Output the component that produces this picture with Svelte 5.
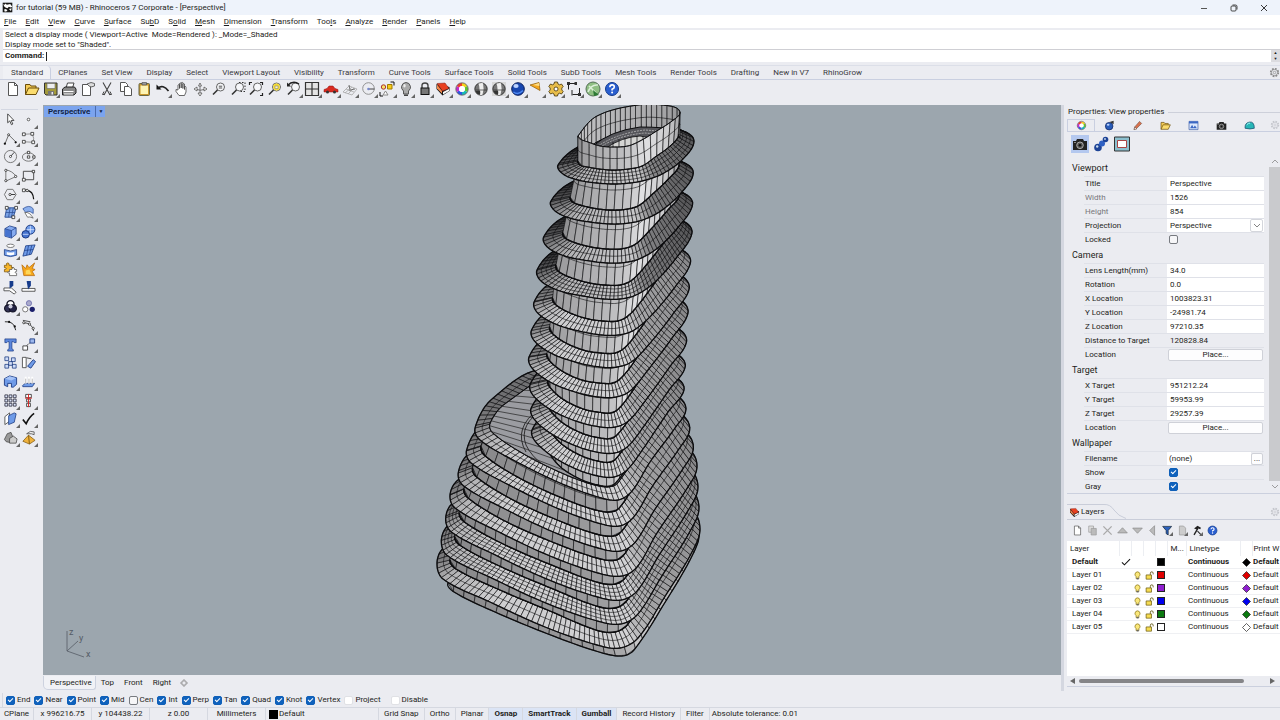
<script lang="ts">
  type Pt = [number, number];
  type Face = { points: string; fill: string };
  type Band = { faces: Face[]; rows: string; rim: string; rimWidth: number };
  type Key = { y: number; outer: Pt[]; inner: Pt[] };
  type Row = { label: string; kind: string; value?: string; dim?: boolean; checked?: boolean };

  const menus = [
    ['', 'F', 'ile'], ['', 'E', 'dit'], ['', 'V', 'iew'], ['', 'C', 'urve'], ['', 'S', 'urface'],
    ['Su', 'b', 'D'], ['S', 'o', 'lid'], ['', 'M', 'esh'], ['', 'D', 'imension'], ['', 'T', 'ransform'],
    ['Too', 'l', 's'], ['', 'A', 'nalyze'], ['', 'R', 'ender'], ['', 'P', 'anels'], ['', 'H', 'elp']
  ];

  const toolTabs = [
    'Standard', 'CPlanes', 'Set View', 'Display', 'Select', 'Viewport Layout', 'Visibility', 'Transform',
    'Curve Tools', 'Surface Tools', 'Solid Tools', 'SubD Tools', 'Mesh Tools', 'Render Tools', 'Drafting',
    'New in V7', 'RhinoGrow'
  ];

  const gear = '<path d="M6.500 1h3l.5 2 1.500.8L13.500 3l1.700 2.500L13.800 7v2l1.400 1.500L13.500 13l-2-.8-1.500.8-.5 2h-3L6 13l-1.500-.8-2 .8-1.700-2.500L2.200 9V7L.8 5.500 2.500 3l2 .8L6 3z" fill="#e8bd4a" stroke="#443208" stroke-width=".8"/><circle cx="8" cy="8" r="2" fill="#fff" stroke="#443208" stroke-width=".8"/>';
  const lens = '<circle cx="9.5" cy="6" r="4" fill="#f6f7fa" stroke="#555" stroke-width=".9"/><path d="M6.5 9L2 13.5" stroke="#333" stroke-width="1.6"/>';
  const sphere = '<circle cx="8" cy="8" r="6.2" fill="#777" stroke="#222" stroke-width=".8"/><path d="M5.500 2.500Q8.500 1.500 10 2.200Q11.500 8 9.500 13.800Q7 14.500 5.500 13.500Q7.500 8 5.500 2.500z" fill="#eee"/><path d="M2.500 9H13.500" stroke="#333" stroke-width=".7"/><path d="M2.500 10Q4 13.500 7 14Q7.500 11 7 9.500z" fill="#333"/>';
  const wheel = '<g fill="none" stroke-width="3"><path d="M8 3.5A4.5 4.5 0 0 1 11.9 5.75" stroke="#f6d21c"/><path d="M11.9 5.75A4.5 4.5 0 0 1 11.9 10.25" stroke="#5fc52e"/><path d="M11.9 10.25A4.5 4.5 0 0 1 8 12.5" stroke="#17b9b6"/><path d="M8 12.5A4.5 4.5 0 0 1 4.1 10.25" stroke="#2b55e8"/><path d="M4.1 10.25A4.5 4.5 0 0 1 4.1 5.75" stroke="#c42bd0"/><path d="M4.1 5.75A4.5 4.5 0 0 1 8 3.5" stroke="#ef3b2c"/></g><circle cx="8" cy="8" r="6.2" fill="none" stroke="#444" stroke-width=".7"/><circle cx="8" cy="8" r="3" fill="#fff"/>';
  const help = '<circle cx="8" cy="8" r="6.5" fill="#2a5fd0" stroke="#123a8c"/><path d="M5.8 6.2Q6 3.9 8.100 3.9T10.300 6Q10.300 7.3 8.100 8.2V9.6" fill="none" stroke="#fff" stroke-width="1.6"/><circle cx="8.1" cy="11.6" r="1" fill="#fff"/>';
  const layersIcon = '<path d="M1.500 3v5l6 6.500 7-4.500V6z" fill="#111"/><path d="M2 2.500L10 2l4 5.500L7.500 10z" fill="#e8401f" stroke="#722" stroke-width=".5"/><path d="M2 3.500v4l5 5V10z" fill="#f58a4c"/><path d="M8 11l6-3v2l-6 3.500z" fill="#f8f8f8"/>';
  const page = '<path d="M3.5 1.5h6l3 3v10h-9z" fill="#fff" stroke="#555"/><path d="M9.5 1.5v3h3" fill="none" stroke="#555"/>';
  const camera = '<path d="M1 5h3l1-2h6l1 2h3v9H1z" fill="#222"/><circle cx="8" cy="9.3" r="3.3" fill="#555" stroke="#aaa"/><circle cx="8" cy="9.3" r="1.3" fill="#111"/><path d="M2 6.500h2" stroke="#888"/>';
  const folder = '<path d="M1.5 13.5V3.5H6l1 1.500h5v2" fill="#f5cc57" stroke="#6b4d0a"/><path d="M1.5 13.5L4.500 7h10.500l-3 6.500z" fill="#fbdc6e" stroke="#6b4d0a"/>';
  const copy = '<path d="M2.5 1.5h5l2 2v7h-7z" fill="#fff" stroke="#555"/><path d="M6.5 5.5h4.500l2.500 2.500v6.500h-7z" fill="#fff" stroke="#555"/>';

  const icons: Record<string, string> = {
    new: page,
    open: folder,
    save: '<path d="M1.5 2h12.5v12H3l-1.500-1.500z" fill="#a39a3c" stroke="#333"/><path d="M4 2.5h8v5H4z" fill="#eee" stroke="#666" stroke-width=".6"/><path d="M5 10h6v4H5z" fill="#777"/><path d="M8.5 11h1.500v2.500H8.500z" fill="#eee"/>',
    print: '<path d="M5 7L6.5 2H13l-1.500 5" fill="#fff" stroke="#444"/><path d="M1.5 8L4 6h9.500L15 8v4l-2 2H1.500z" fill="#888" stroke="#222"/><path d="M2.5 10.5h10M3 13h9" stroke="#fff"/>',
    sheet: '<path d="M2.5 3.5h6l2 2v9h-8z" fill="#fff" stroke="#555"/><path d="M7 3l4-1.500 3.500 1v2.500L11 6 9 5z" fill="#ddd" stroke="#444" stroke-width=".8"/>',
    cut: '<path d="M4 1.500L11 14M12 1.500L5 14" stroke="#444" stroke-width="1.1"/><path d="M5 10.500L3.500 13.500H5.500M11 10.500l1.500 3h-2" fill="none" stroke="#444"/>',
    copy,
    paste: '<rect x="3" y="2.5" width="10.5" height="12" rx="1" fill="#c9972b" stroke="#664"/><path d="M4.5 4.5h7.500v8.500H4.500z" fill="#fdf4b4"/><path d="M6 1.5h4.500v2.500H6z" fill="#999" stroke="#444" stroke-width=".6"/>',
    undo: '<path d="M1.500 3.500v5h5z" fill="#111"/><path d="M3 7Q8 3 13.500 10" fill="none" stroke="#222" stroke-width="1.7"/>',
    pan: '<path d="M5 14.5L2 10.5V8.500l2 .5V4q1-1 1.500 0V7.500 2.500q1-1 1.700 0V7 1.800q1-1 1.700 0V7.500 3q1-1 1.600 0V8.500 5.500q1.500-.5 1.500 1V11l-1.500 3.500z" fill="#fff" stroke="#444" stroke-width=".8"/>',
    rotate: '<path d="M8 2l1.500 3h-3zM8 15l2-3H6zM2 8l3-2v4zM15 8l-3-2v4z" fill="#fff" stroke="#555" stroke-width=".8"/><path d="M8 5v7M5 8.500Q8 10 12 8.500" fill="none" stroke="#555" stroke-width=".8"/>',
    zoom: lens + '<path d="M7.8 5.200h3.400M7.800 7h3.400" stroke="#555"/>',
    zoomWindow: lens + '<path d="M9 1.500h6v9H9" fill="none" stroke="#333" stroke-dasharray="1.5 1.5"/>',
    zoomExtents: lens + '<path d="M1.5 4V1.500H4M12 1.500h2.500V4M14.500 12v2.500H12" fill="none" stroke="#222" stroke-width="1.2"/>',
    zoomSelected: lens + '<circle cx="9.5" cy="6" r="3.4" fill="#f5dc31"/><path d="M8 5h3v2.500H8z" fill="#fbf6c2" stroke="#888" stroke-width=".6"/>',
    undoView: lens + '<path d="M1.5 4.500Q7-1 13 3" fill="none" stroke="#222" stroke-width="1.5"/><path d="M1 1.500v4h4z" fill="#222"/>',
    viewports: '<path d="M1.500 1.500h13v13h-13z" fill="#e4e4e4" stroke="#333" stroke-width="1.2"/><path d="M8 1.500v13M1.500 8h13" stroke="#333" stroke-width="1.2"/>',
    car: '<path d="M1 8.500l3-1 2-2.500h4l2 2.500 3 1v2.500H1z" fill="#d92b20" stroke="#811" stroke-width=".5"/><circle cx="4.5" cy="11" r="1.5" fill="#333"/><circle cx="11.5" cy="11" r="1.5" fill="#333"/>',
    cplane: '<path d="M1 11l6-6 8 3-5 6zM4 8l8 3M3 12l7-6M6 13l6-6" fill="none" stroke="#aaa" stroke-width=".8"/><path d="M8 9l5-1M8 9L7 4" stroke="#555" stroke-width=".8"/><circle cx="8" cy="9" r="1.3" fill="#999"/>',
    circleSnap: '<circle cx="7.5" cy="7.5" r="5.8" fill="none" stroke="#888" stroke-width=".9"/><path d="M7.500 8h6" stroke="#333" stroke-width=".9"/><circle cx="7.5" cy="8" r="1.3" fill="#7788cc"/>',
    shapes: '<circle cx="4.5" cy="6" r="2.200" fill="#f9e063" stroke="#a33"/><path d="M8.500 3.500h4.500v4.500H8.500z" fill="#f7cd16" stroke="#a37a00"/><path d="M6.500 10l2.500 4H4z" fill="#fff" stroke="#888"/><path d="M11.500 1h3.500v3.500M1 11v4h3" fill="none" stroke="#111"/>',
    bulb: '<path d="M5.500 10Q3 7.500 3.500 5.500 4.500 1.500 8 1.500T12.500 5.500Q13 7.500 10.500 10v3h-5z" fill="#aaa" stroke="#555"/><path d="M6 13.500h4v1.500H6z" fill="#444"/><ellipse cx="6.5" cy="4.8" rx="1.2" ry="1.8" fill="#eee"/>',
    lock: '<path d="M5 7V4.500Q5 2 8 2t3 2.500V7" fill="none" stroke="#444" stroke-width="1.4"/><rect x="4" y="7" width="8" height="6.5" fill="#777" stroke="#111"/>',
    layers: layersIcon,
    wheel,
    shaded: sphere,
    ghosted: '<path d="M1 1h14v14H1z" fill="#d7d7d7"/>' + sphere,
    blueBall: '<circle cx="8" cy="8" r="6.300" fill="#1746b0" stroke="#0a1f5c"/><ellipse cx="6" cy="5" rx="2.600" ry="2" fill="#bcd3ff"/><path d="M3.500 11Q8 14.500 13 9.500" fill="none" stroke="#4e88f2" stroke-width="1.5"/>',
    cone: '<path d="M1 4l9-2.500 1 8z" fill="#f3a61e" stroke="#8a5a08" stroke-width=".7"/><path d="M4 4l6-2 .3 3z" fill="#fde08a"/>',
    gear,
    dims: '<path d="M2.500 2.500v6M2.500 2.500h7M6 9v5.500M6.500 13.500h7M13.500 7v6" fill="none" stroke="#222"/><path d="M1 1h3v3H1zM8.500 1h2.500v3H8.500zM12 12h3v3h-3z" fill="#333"/>',
    globe: '<circle cx="8" cy="8" r="7" fill="#8fbf83" stroke="#567058"/><path d="M3 11Q6 3 13 4M4 5l7 7" fill="none" stroke="#dcefd8" stroke-width="1.5"/><path d="M8 9l6 5-5 1z" fill="#2d7a35"/>',
    help,
    arrow: '<path d="M5 2v9.500l2.200-2 1.800 4 1.500-.7-1.800-3.800h3z" fill="#fff" stroke="#333" stroke-width=".9"/>',
    point: '<circle cx="8" cy="8" r="1.4" fill="#fff" stroke="#333" stroke-width=".8"/>',
    polyline: '<path d="M2 14L6 4l8 8" fill="none" stroke="#555" stroke-width=".9"/><circle cx="2" cy="13.5" r="1.2" fill="#111"/><circle cx="6" cy="4" r="1.1" fill="#fff" stroke="#222" stroke-width=".8"/><circle cx="13.5" cy="12" r="1.2" fill="#111"/>',
    curve: '<path d="M3 3.500L12 3Q14.500 8 13 12L3 11.500" fill="none" stroke="#777" stroke-width=".8"/><path d="M1.500 2h3v3h-3zM10.500 1.500h3v3h-3zM1.500 10h3v3h-3zM11.500 10.500h3v3h-3z" fill="#fff" stroke="#222" stroke-width=".8"/>',
    circle: '<circle cx="8" cy="8" r="6.5" fill="none" stroke="#666" stroke-width=".9"/><path d="M8 8l4-4.500" stroke="#222" stroke-width=".9"/><circle cx="8" cy="8" r="1.1" fill="#fff" stroke="#222" stroke-width=".8"/>',
    ellipse: '<ellipse cx="8" cy="8.5" rx="6.5" ry="4.5" fill="none" stroke="#666" stroke-width=".9"/><path d="M6.800 2.500h2.500V5H6.800zM6.800 7.300h2.500v2.500H6.800zM12.500 7.300H15v2.500h-2.500z" fill="#fff" stroke="#222" stroke-width=".8"/>',
    arc: '<path d="M3 14V2Q10 3 14 9z" fill="none" stroke="#666" stroke-width=".9"/><circle cx="3" cy="2.5" r="1.2" fill="#fff" stroke="#222" stroke-width=".8"/><circle cx="3" cy="13.5" r="1.2" fill="#fff" stroke="#222" stroke-width=".8"/><circle cx="13.5" cy="9" r="1.2" fill="#fff" stroke="#222" stroke-width=".8"/>',
    rect: '<path d="M2.500 3.500h11v9h-11z" fill="none" stroke="#444"/><path d="M1.500 11h3v3h-3zM12 2.500h2.500V5H12z" fill="#fff" stroke="#222" stroke-width=".8"/>',
    polygon: '<path d="M4.500 2.500h6L14 8l-3.500 5.500h-6L1.500 8z" fill="none" stroke="#666" stroke-width=".9"/><path d="M7 8h6" stroke="#333"/><circle cx="7.5" cy="8" r="1.2" fill="#fff" stroke="#222" stroke-width=".8"/>',
    fillet: '<path d="M2 3.500h4Q13 4 13.500 13" fill="none" stroke="#111" stroke-width="1.3"/><path d="M1.500 2h3v3h-3z" fill="#fff" stroke="#222" stroke-width=".8"/><circle cx="6.5" cy="3.7" r="1.3" fill="#fff" stroke="#222" stroke-width=".8"/>',
    surface: '<path d="M4 3h10l-3 10H2z" fill="#7aa2e6" stroke="#2d4f96"/><path d="M7.500 3L6 13M11 3L9 13M3 8h10" stroke="#2d4f96" stroke-width=".8"/><path d="M2.500 1.500h3v3h-3zM12.500 1.500h3v3h-3zM9.500 11.500h3v3h-3z" fill="#fff" stroke="#222" stroke-width=".8"/>',
    sweep: '<path d="M2 4Q9-1 13 4v5Q8 5 5 8z" fill="#8cb0ee" stroke="#2d4f96" stroke-width=".8"/><path d="M4 8q5-1 9 6-4-2-6-1z" fill="#fff" stroke="#555" stroke-width=".8"/>',
    box: '<path d="M2 5l5-3 7 2v7l-5 4-7-2z" fill="#86abf0" stroke="#16357e" stroke-width=".8"/><path d="M2.300 5.300L8.800 7.200V14.500L2.300 12.700z" fill="#4673cf"/><path d="M2 5l7 2 5-3M9 7v8" fill="none" stroke="#16357e" stroke-width=".7"/>',
    spheres: '<circle cx="10" cy="6" r="4.8" fill="#6f9be8" stroke="#16357e"/><circle cx="5" cy="11" r="4" fill="#4673cf" stroke="#16357e"/><path d="M6 6h8M10 2v8M2 11h6" stroke="#dde8ff" stroke-width=".8"/>',
    pipe: '<ellipse cx="8" cy="3" rx="4" ry="1.8" fill="#fff" stroke="#555" stroke-width=".8"/><path d="M1.500 7Q8 10 14.500 7v6Q8 16 1.500 13z" fill="#6f9be8" stroke="#16357e" stroke-width=".8"/><path d="M4 9.500Q8 11 12 9.500v3Q8 13.500 4 12.500z" fill="#fff"/>',
    mesh: '<path d="M5 3l10-1-4 10-9 2z" fill="#6f9be8" stroke="#16357e" stroke-width=".8"/><path d="M3.500 8L13 7M8 3l-2 10M11.500 2.500L9 12.500" stroke="#16357e" stroke-width=".7"/>',
    puzzle: '<path d="M1.500 3.500h2.500q-1-2.500 1-2.500T6.500 3.500H9V6q2.500-1 2.500 1T9 8v2.500H1.500V8q2 0 2-1t-2-1z" fill="#f6b62b" stroke="#7a520a" stroke-width=".8"/><path d="M7 8h2.500q0-2 1.500-2t1 2h2.500v2q-1.500 0-1.500 1t1.500 1v2.500H7V12Q5 12 5 11t2-.5z" fill="#fff" stroke="#555" stroke-width=".8"/>',
    explode: '<path d="M1 3l4 4 1.500-4L8.500 6 14.500 1 12 7l3 1-3 2 2.500 4.500H3z" fill="#f6a71c" stroke="#b8690a" stroke-width=".8"/><path d="M5 9l4-1 2 5H5z" fill="#fdd75b"/>',
    trim: '<path d="M1 8.500h8l5 4.500-2 2-5-3.500H1z" fill="#fff" stroke="#444" stroke-width=".9"/><path d="M7 1h4v5L7 9z" fill="#173c8c"/>',
    split: '<path d="M1 9h14v3H1z" fill="#fff" stroke="#444" stroke-width=".9"/><path d="M6 1h4.500v5L7.500 10z" fill="#173c8c"/>',
    union: '<circle cx="8" cy="5.5" r="3.8" fill="#fff" stroke="#112" stroke-width="1.4"/><circle cx="5.5" cy="10" r="3.8" fill="#335" stroke="#112" stroke-width="1.2"/><circle cx="10.5" cy="10" r="3.8" fill="#224" stroke="#112" stroke-width="1.2"/><circle cx="8" cy="8" r="2.2" fill="#ccd"/>',
    group: '<circle cx="8.5" cy="4.5" r="2.8" fill="#aac" stroke="#66a" stroke-width=".8"/><circle cx="4.5" cy="11" r="2.8" fill="#fff" stroke="#555" stroke-width=".8"/><circle cx="12" cy="11" r="2.8" fill="#1b1f6b"/>',
    blend: '<path d="M2 4Q12 3 13.500 13" fill="none" stroke="#222"/><circle cx="6.5" cy="4.2" r="1.2" fill="#111"/><circle cx="12.5" cy="9" r="1.2" fill="#111"/>',
    adjust: '<path d="M2 5Q12 5 13.500 14M2 2.500l8 1.500" fill="none" stroke="#333" stroke-width=".9"/><circle cx="3" cy="5" r="1.2" fill="#fff" stroke="#222" stroke-width=".8"/><circle cx="9" cy="6.5" r="1.2" fill="#fff" stroke="#222" stroke-width=".8"/><circle cx="13" cy="11" r="1.2" fill="#fff" stroke="#222" stroke-width=".8"/>',
    text: '<path d="M2 2h12v4h-2L11 5H9.500v7.500l1.500 1V15H5v-1.500l1.500-1V5H5L4 6H2z" fill="#5c87dc" stroke="#16357e" stroke-width=".7"/>',
    move: '<path d="M2 9.500h5V14H2z" fill="#fff" stroke="#333" stroke-width=".9"/><path d="M9.500 2h5v4.500h-5z" fill="#9db8ee" stroke="#16357e" stroke-width=".9"/><path d="M6 9l4-3" stroke="#333" stroke-dasharray="1.5 1"/>',
    block: '<path d="M2 2h4v4H2zM9 3h4v4H9zM6 7h4v4H6zM2 10h4v4H2zM10 10h4v4h-4z" fill="#cfdcf8" stroke="#16357e" stroke-width=".8"/>',
    orient: '<path d="M1.500 2.500h4v11h-4z" fill="#fff" stroke="#444" stroke-width=".9"/><path d="M7 12l6-7 2.500 2-5 7z" fill="#6f9be8" stroke="#16357e" stroke-width=".9"/><path d="M6 3l5 1" stroke="#444"/>',
    solid: '<path d="M1.500 5L7 2l7.500 2v7L11 14H9v-4H5v3.500L1.500 12z" fill="#6f9be8" stroke="#16357e" stroke-width=".9"/><path d="M2 5L7 2.500l7 1.800L9 7z" fill="#a6c3f7"/>',
    extrude: '<path d="M1.500 12.500l3-2.500h10l-2.500 3.500H2z" fill="#6f9be8" stroke="#16357e" stroke-width=".8"/><path d="M5 10V3M8.500 10V3M12 10V3" stroke="#fff" stroke-width="2"/><path d="M5 5v5M8.500 5v5M12 5v5" stroke="#999" stroke-width=".7"/>',
    array: '<path d="M2 2h3v3H2zM6.500 2h3v3h-3zM11 2h3v3h-3zM2 6.500h3v3H2zM6.500 6.500h3v3h-3zM11 6.500h3v3h-3zM2 11h3v3H2zM6.500 11h3v3h-3zM11 11h3v3h-3z" fill="#dbe4f8" stroke="#223" stroke-width=".8"/>',
    align: '<path d="M5 1.500h6v3.500H5zM6 6.500h4v3H6zM6 11h4v3.500H6z" fill="#fff" stroke="#333" stroke-width=".9"/><path d="M8 1v14M4.500 5.500h7" stroke="#d22"/>',
    cage: '<path d="M2 6l5-4v9l-5 3.500z" fill="#fff" stroke="#333" stroke-width=".8"/><path d="M6 5l6-3 2 1-2 9-6 2.500z" fill="#6f9be8" stroke="#16357e" stroke-width=".8"/>',
    check: '<path d="M2 9l3.500 4.500Q9 6 14 2.500" fill="none" stroke="#111" stroke-width="1.8"/>',
    shapesGray: '<path d="M1.500 10l3-6 4-1.500 2 5-2 6-5-1z" fill="#999" stroke="#444" stroke-width=".8"/><path d="M7 9l4-2.500 4 3-1 4.500H7z" fill="#ccc" stroke="#444" stroke-width=".8"/>',
    pyramid: '<path d="M2 12l6-6.500 7 5.500-6 4z" fill="#f0b23c" stroke="#805a10" stroke-width=".8"/><path d="M8 5.500L9 15" stroke="#805a10"/><path d="M6 4Q10 0 14 2v3L11 4z" fill="#eee" stroke="#444" stroke-width=".8"/>',
    object: '<circle cx="7.5" cy="9" r="5.5" fill="#2a5db8" stroke="#0a1f5c"/><path d="M8 3l6-2v5z" fill="#333"/><ellipse cx="6" cy="7" rx="2" ry="1.5" fill="#bcd3ff"/>',
    pencil: '<path d="M3 14l1-4 7-8 3 3-7 7z" fill="#d9714d" stroke="#643" stroke-width=".8"/><path d="M3 14l1-4 3 3z" fill="#fff" stroke="#643" stroke-width=".8"/>',
    folder,
    display: '<path d="M1.500 2h13v12h-13z" fill="#dce8fb" stroke="#3a5ca8"/><path d="M1.500 2h13v3h-13z" fill="#3a67c4"/><path d="M3 12l3-5 2 4 2-3 3 4z" fill="#3a67c4"/>',
    camera,
    dome: '<path d="M1.500 12Q1 4 8 3t7 9q-6 2-13.500 0z" fill="#27b6b6" stroke="#146"/><path d="M4 7q2-3 5-2.500" fill="none" stroke="#bff" stroke-width="1.3"/>',
    link: '<circle cx="5" cy="11.5" r="3.8" fill="#1d4396"/><circle cx="9" cy="7.5" r="3" fill="#2f61c4"/><circle cx="12.5" cy="3.5" r="2.800" fill="#1d4396"/><circle cx="4.2" cy="10.5" r="1.2" fill="#cde"/><circle cx="12" cy="3" r=".9" fill="#cde"/>',
    frame: '<path d="M.5 1h15v14H.5z" fill="#8cc0cf" stroke="#333"/><path d="M3.500 4.500h9v7h-9z" fill="#fff" stroke="#a44"/>',
    copyGray: '<path d="M2.500 1.500h7v9h-7z" fill="#ddd" stroke="#999"/><path d="M6 5h7.500v9.500H6z" fill="#bbb" stroke="#999"/>',
    delete: '<path d="M2 2l12 12M14 2L2 14" stroke="#aaa" stroke-width="2"/>',
    up: '<path d="M8 4l7 7.500H1z" fill="#bbb" stroke="#888"/>',
    down: '<path d="M8 12L1 4.500h14z" fill="#bbb" stroke="#888"/>',
    left: '<path d="M4 8l7-7v14z" fill="#bbb" stroke="#888"/>',
    filter: '<path d="M1 2h13L9 8v6.500l-3-2V8z" fill="#2d62bd" stroke="#123"/>',
    pageGray: '<path d="M3.500 1.500h6l3 3v10h-9z" fill="#ccc" stroke="#999"/>',
    hammer: '<path d="M3 5l5-4 5 3-1 2-3-1-1 2z" fill="#222"/><path d="M8.500 5L3 14.500" stroke="#222" stroke-width="2"/><path d="M8 9l5 5" stroke="#222" stroke-width="1.5"/>',
    yellowBulb: '<path d="M5.500 10Q3 7.500 3.500 5.500 4.500 1.500 8 1.500T12.500 5.500Q13 7.500 10.500 10v3.500h-5z" fill="#fbe87a" stroke="#8a7416" stroke-width="1.3"/><path d="M6.500 12h3.500v3H6.500z" fill="#666"/>',
    unlock: '<path d="M9.500 7V4Q9.500 1.500 12 1.500T14.500 4v2" fill="none" stroke="#665c1c" stroke-width="1.6"/><path d="M2 7h9.500v7.500H2z" fill="#f6dc52" stroke="#6b5a10" stroke-width="1.3"/>',
    tick: '<path d="M1.500 8.500l4 4L14.500 3.500" fill="none" stroke="#111" stroke-width="1.7"/>',
    cog: '<circle cx="8" cy="8" r="5.5" fill="none" stroke="currentColor" stroke-width="2.5" stroke-dasharray="2.5 1.82"/><circle cx="8" cy="8" r="4.5" fill="none" stroke="currentColor"/><circle cx="8" cy="8" r="1.8" fill="none" stroke="currentColor"/>',
    rhino: '<path d="M1 1h14v14H1z" fill="#181818"/><path d="M2 3l2 1 1-2 2 2 5-1 3 4-2 1-3-1-2 2-3-1-2-2zM3 11l3-1 2 3-4 1zM10 10l4-1-1 4z" fill="#fff"/>'
  };

  const standardTools = [
    'new', 'open', 'save+', 'print', 'sheet', 'cut', 'copy', 'paste', 'undo+', 'pan', 'rotate', 'zoom',
    'zoomWindow', 'zoomExtents', 'zoomSelected', 'undoView+', 'viewports+', 'car+', 'cplane+', 'circleSnap+',
    'shapes+', 'bulb+', 'lock+', 'layers+', 'wheel+', 'shaded', 'ghosted+', 'blueBall+', 'cone+', 'gear+',
    'dims+', 'globe+', 'help+'
  ];

  const sideTools = [
    'arrow', 'point+', 'polyline+', 'curve+', 'circle+', 'ellipse+', 'arc+', 'rect+', 'polygon+', 'fillet+',
    'surface+', 'sweep+', 'box+', 'spheres+', 'pipe+', 'mesh+', 'puzzle', 'explode', 'trim', 'split', 'union+',
    'group', 'blend', 'adjust+', 'text', 'move+', 'block', 'orient', 'solid+', 'extrude+', 'array+', 'align+',
    'cage+', 'check+', 'shapesGray+', 'pyramid+'
  ];

  const panelTabs = ['wheel', 'object', 'pencil', 'folder', 'display', 'camera', 'dome'];
  const layerTools = ['new', 'copyGray', 'delete', 'up', 'down', 'left', 'filter+', 'pageGray+', 'hammer+', 'help'];

  const sections: { title: string; rows: Row[] }[] = [
    {
      title: 'Viewport',
      rows: [
        { label: 'Title', kind: 'text', value: 'Perspective' },
        { label: 'Width', kind: 'text', value: '1526', dim: true },
        { label: 'Height', kind: 'text', value: '854', dim: true },
        { label: 'Projection', kind: 'select', value: 'Perspective' },
        { label: 'Locked', kind: 'check', checked: false }
      ]
    },
    {
      title: 'Camera',
      rows: [
        { label: 'Lens Length(mm)', kind: 'text', value: '34.0' },
        { label: 'Rotation', kind: 'text', value: '0.0' },
        { label: 'X Location', kind: 'text', value: '1003823.31' },
        { label: 'Y Location', kind: 'text', value: '-24981.74' },
        { label: 'Z Location', kind: 'text', value: '97210.35' },
        { label: 'Distance to Target', kind: 'static', value: '120828.84' },
        { label: 'Location', kind: 'button' }
      ]
    },
    {
      title: 'Target',
      rows: [
        { label: 'X Target', kind: 'text', value: '951212.24' },
        { label: 'Y Target', kind: 'text', value: '59953.99' },
        { label: 'Z Target', kind: 'text', value: '29257.39' },
        { label: 'Location', kind: 'button' }
      ]
    },
    {
      title: 'Wallpaper',
      rows: [
        { label: 'Filename', kind: 'file', value: '(none)' },
        { label: 'Show', kind: 'check', checked: true },
        { label: 'Gray', kind: 'check', checked: true }
      ]
    }
  ];

  const layers = [
    { name: 'Default', color: '#000000', current: true },
    { name: 'Layer 01', color: '#e00000', current: false },
    { name: 'Layer 02', color: '#8f1fd0', current: false },
    { name: 'Layer 03', color: '#0000f0', current: false },
    { name: 'Layer 04', color: '#0b7a10', current: false },
    { name: 'Layer 05', color: '#ffffff', current: false }
  ];

  let snaps = $state([
    { name: 'End', on: true }, { name: 'Near', on: true }, { name: 'Point', on: true }, { name: 'Mid', on: true },
    { name: 'Cen', on: false }, { name: 'Int', on: true }, { name: 'Perp', on: true }, { name: 'Tan', on: true },
    { name: 'Quad', on: true }, { name: 'Knot', on: true }, { name: 'Vertex', on: true }
  ]);
  let activeTab = $state('Standard');
  let activeView = $state('Perspective');

  // Slab outlines run from the left tip along the front edge, round the right side and back.
  const towerKeys: Key[] = [
    {
      y: 184,
      outer: [[558, 165], [563, 174], [578, 180], [597, 183], [614, 184], [630, 183], [646, 180], [664, 173], [683, 159], [694, 141], [683, 131], [640, 125], [580, 146]],
      inner: [[578, 161], [580, 165], [588, 167], [600, 169], [613, 170], [628, 169], [642, 166], [655, 157], [670, 146], [679, 134], [672, 126], [640, 128], [590, 145]]
    },
    {
      y: 299,
      outer: [[537, 270], [541, 281], [560, 291], [583, 296], [604, 299], [620, 299], [636, 295], [655, 282], [677, 257], [692, 233], [684, 222], [640, 220], [556, 250]],
      inner: [[556, 265], [558, 271], [572, 278], [590, 283], [606, 285], [620, 285], [632, 280], [647, 264], [666, 240], [680, 222], [672, 213], [640, 210], [566, 250]]
    },
    {
      y: 397,
      outer: [[529, 357], [532, 368], [550, 382], [575, 392], [598, 397], [616, 397], [630, 391], [648, 370], [672, 338], [688, 313], [680, 300], [640, 295], [545, 338]],
      inner: [[547, 354], [549, 360], [562, 371], [582, 380], [600, 383], [613, 383], [622, 377], [636, 359], [658, 325], [676, 301], [668, 290], [640, 285], [560, 335]]
    },
    {
      y: 477,
      outer: [[532, 430], [535, 441], [552, 456], [576, 469], [598, 476], [614, 477], [627, 470], [643, 449], [668, 412], [684, 390], [676, 378], [640, 375], [550, 410]],
      inner: [[549, 424], [551, 432], [563, 445], [582, 456], [598, 461], [611, 462], [619, 455], [632, 436], [656, 398], [672, 376], [664, 366], [640, 365], [560, 405]]
    }
  ];

  const podiumKeys: Key[] = [
    {
      y: 500,
      outer: [[475, 428], [480, 440], [515, 461], [560, 483], [598, 497], [618, 500], [632, 491], [650, 462], [675, 428], [686, 409], [676, 396], [545, 369], [492, 399]],
      inner: [[490, 424], [493, 433], [524, 454], [562, 473], [595, 485], [613, 486], [622, 477], [638, 452], [664, 412], [674, 394], [664, 384], [560, 374], [505, 404]]
    },
    {
      y: 576,
      outer: [[450, 495], [455, 508], [497, 531], [550, 556], [598, 573], [622, 576], [637, 567], [657, 533], [686, 490], [697, 467], [688, 450], [540, 430], [458, 480]],
      inner: [[464, 489], [468, 498], [505, 521], [555, 543], [597, 558], [616, 560], [626, 552], [643, 521], [674, 474], [685, 452], [676, 440], [540, 430], [474, 470]]
    },
    {
      y: 648,
      outer: [[437, 563], [443, 579], [490, 602], [545, 627], [597, 645], [620, 648], [638, 638], [664, 598], [692, 552], [700, 528], [690, 510], [540, 500], [444, 548]],
      inner: [[450, 560], [456, 569], [500, 590], [550, 611], [596, 630], [615, 632], [628, 624], [648, 588], [678, 540], [688, 515], [678, 500], [540, 500], [460, 540]]
    }
  ];

  const footing: Pt[] = [[448, 583], [454, 592], [495, 612], [548, 634], [599, 652], [622, 656], [634, 650], [664, 604], [692, 556], [699, 533], [688, 515], [540, 510], [470, 560]];
  const parapet: Pt[] = [[578, 136], [580, 139], [588, 142], [600, 146], [613, 147], [628, 146], [640, 141], [655, 132], [672, 121], [680, 112], [670, 106], [638, 105], [597, 116]];

  function mix(a: Pt[], b: Pt[], t: number): Pt[] {
    return a.map((p, i) => [p[0] + (b[i][0] - p[0]) * t, p[1] + (b[i][1] - p[1]) * t]);
  }

  function contour(keys: Key[], y: number, side: 'outer' | 'inner') {
    let i = 0;
    while (i < keys.length - 2 && y > keys[i + 1].y) i++;
    return mix(keys[i][side], keys[i + 1][side], (y - keys[i].y) / (keys[i + 1].y - keys[i].y));
  }

  // closed Hermite spline, tangents scaled to the segment so short segments never overshoot
  function at(c: Pt[], u: number): Pt {
    const n = c.length;
    const i = Math.floor(u);
    const t = u - i;
    const [a, b, d, e] = [-1, 0, 1, 2].map((k) => c[(i + k + n) % n]);
    const len = Math.hypot(d[0] - b[0], d[1] - b[1]);
    const k0 = len / Math.hypot(d[0] - a[0], d[1] - a[1]);
    const k1 = len / Math.hypot(e[0] - b[0], e[1] - b[1]);
    const axis = (j: number) =>
      (2 * t ** 3 - 3 * t ** 2 + 1) * b[j]
      + (t ** 3 - 2 * t ** 2 + t) * (d[j] - a[j]) * k0
      + (3 * t ** 2 - 2 * t ** 3) * d[j]
      + (t ** 3 - t ** 2) * (e[j] - b[j]) * k1;
    return [axis(0), axis(1)];
  }

  function line(c: Pt[], from: number, to: number) {
    let d = '';
    for (let u = from; u <= to + 0.001; u += 0.1) {
      const p = at(c, u);
      d += `${d ? 'L' : 'M'}${p[0].toFixed(1)} ${p[1].toFixed(1)}`;
    }
    return d;
  }

  function ramp(stops: Pt[], u: number) {
    let i = 0;
    while (i < stops.length - 2 && u > stops[i + 1][0]) i++;
    const [a, b] = [stops[i], stops[i + 1]];
    const v = Math.round(a[1] + ((b[1] - a[1]) * (u - a[0])) / (b[0] - a[0]));
    return `rgb(${v},${v},${v + 2})`;
  }

  const slabTop: Pt[] = [[0, 100], [1, 140], [2, 180], [5.5, 200], [6.5, 130], [9, 85], [10, 70], [12, 40], [13, 90]];
  const slabLow: Pt[] = [[0, 140], [1, 180], [2, 206], [5.5, 210], [6.5, 165], [9, 135], [10, 120], [12, 110], [13, 130]];
  const wallTone: Pt[] = [[0, 145], [2, 168], [4, 185], [5.2, 202], [6, 225], [7.5, 205], [9, 150], [13, 200]];
  const podiumWall: Pt[] = [[0, 130], [2, 145], [4, 155], [5.2, 178], [6, 200], [7.5, 180], [9, 140], [13, 140]];

  function band(a: Pt[], b: Pt[], from: number, to: number, step: number, rows: number, tone: Pt[], rimWidth = 1.3): Band {
    const cuts = [from];
    let last = at(a, from);
    let run = 0;
    for (let u = from + 0.02; u < to; u += 0.02) {
      const p = at(a, u);
      run += Math.hypot(p[0] - last[0], p[1] - last[1]);
      last = p;
      if (run >= step) {
        cuts.push(u);
        run = 0;
      }
    }
    cuts.push(to);
    const faces: Face[] = [];
    for (let i = 0; i < cuts.length - 1; i++) {
      const quad = [at(a, cuts[i]), at(a, cuts[i + 1]), at(b, cuts[i + 1]), at(b, cuts[i])];
      faces.push({
        points: quad.map((p) => `${p[0].toFixed(1)},${p[1].toFixed(1)}`).join(' '),
        fill: ramp(tone, cuts[i])
      });
    }
    let inner = '';
    for (let k = 1; k < rows; k++) inner += line(mix(a, b, k / rows), from, to);
    return { faces, rows: inner, rim: line(a, from, to) + line(b, from, to), rimWidth };
  }

  const podiumLevels = [500, 526, 551, 576, 600, 624, 648];
  const towerLevels = [184, 224, 263, 299, 335, 367, 397, 427, 453, 477];

  function stack(keys: Key[], levels: number[], wallStep: number, slabStep: number, denseRows: number[], walls: Pt[]) {
    const bands: Band[] = [];
    for (let i = levels.length - 1; i >= 0; i--) {
      const inner = contour(keys, levels[i], 'inner');
      const tone = levels[i] < 310 ? slabTop : slabLow;
      bands.push(band(contour(keys, levels[i], 'outer'), inner, 0, 13, slabStep, denseRows.includes(i) ? 4 : 2, tone));
      if (i > 0) bands.push(band(inner, contour(keys, levels[i - 1], 'inner'), 0, 9, wallStep, 2, walls));
    }
    return bands;
  }

  const shift = (c: Pt[], dy: number): Pt[] => c.map((p) => [p[0], p[1] + dy]);
  const towerFoot = contour(towerKeys, 477, 'inner');
  const roofEdge = line(contour(podiumKeys, 500, 'inner'), 0, 13);

  const podium = [
    band(footing, podiumKeys[2].inner, 0, 9.5, 11, 1, podiumWall),
    ...stack(podiumKeys, podiumLevels, 11, 5, [4, 5], podiumWall)
  ];
  const tower = [
    band(shift(towerFoot, 24), towerFoot, 0, 9, 8, 1, wallTone),
    ...stack(towerKeys, towerLevels, 8, 4, [0, 3], wallTone)
  ];
  const backWall = band(parapet, shift(parapet, 26), 9, 13, 5, 2, wallTone, 1);
  const crown = band(towerKeys[0].inner, parapet, 0, 9, 7, 2, wallTone, 1);
  const roofLines = Array.from({ length: 26 }, (_, i) => `M480 ${378 + i * 5}L600 ${376 + i * 9}`).join('');
</script>

{#snippet icon(name: string, size = 16)}
  <svg class="icon" width={size} height={size} viewBox="0 0 16 16" fill="none" aria-hidden="true">
    {@html icons[name.replace('+', '')]}
  </svg>
{/snippet}

{#snippet tool(name: string, size = 16)}
  <button class="tool" class:flyout={name.endsWith('+')} aria-label={name.replace('+', '')}>
    {@render icon(name, size)}
  </button>
{/snippet}

{#snippet mesh(bands: Band[])}
  {#each bands as b}
    <g stroke="#0c0c0e" stroke-width="0.6" stroke-linejoin="round">
      {#each b.faces as f}
        <polygon points={f.points} fill={f.fill} />
      {/each}
      <path d={b.rows} fill="none" stroke-width="0.6" />
      <path d={b.rim} fill="none" stroke-width={b.rimWidth} />
    </g>
  {/each}
{/snippet}

<div class="app">
  <header class="titlebar">
    {@render icon('rhino', 11)}
    <span class="title">for tutorial (59 MB) - Rhinoceros 7 Corporate - [Perspective]</span>
    <div class="window-buttons">
      <button aria-label="Minimize"><svg width="8" height="8" viewBox="0 0 8 8"><path d="M1 4.500h6" stroke="#555" /></svg></button>
      <button aria-label="Restore"><svg width="8" height="8" viewBox="0 0 8 8" fill="none" stroke="#222" stroke-width="0.8"><rect x="1" y="2" width="5" height="5" rx="1" /><path d="M2.500 1h3q1.500 0 1.500 1.500v3" /></svg></button>
      <button aria-label="Close"><svg width="8" height="8" viewBox="0 0 8 8"><path d="M1 1l6 6M7 1L1 7" stroke="#222" stroke-width="0.9" /></svg></button>
    </div>
  </header>

  <nav class="menubar">
    {#each menus as [before, key, after]}
      <button>{before}<u>{key}</u>{after}</button>
    {/each}
  </nav>

  <section class="command">
    <div class="history">
      <p>Select a display mode ( Viewport=Active&nbsp; Mode=Rendered ): _Mode=_Shaded</p>
      <p>Display mode set to "Shaded".</p>
    </div>
    <div class="prompt">
      <label for="command">Command:</label>
      <span class="caret"></span>
      <input id="command" type="text" />
      <div class="spinner">
        <button aria-label="Previous command">▲</button>
        <button aria-label="Next command">▼</button>
      </div>
    </div>
  </section>

  <div class="tool-tabs">
    {#each toolTabs as tab}
      <button class:active={tab === activeTab} onclick={() => (activeTab = tab)}>{tab}</button>
    {/each}
    <span class="cog">{@render icon('cog', 11)}</span>
  </div>

  <div class="toolbar">
    {#each standardTools as name}
      {@render tool(name)}
    {/each}
  </div>

  <main class="body">
    <aside class="side-tools">
      {#each sideTools as name}
        {@render tool(name, 15)}
      {/each}
    </aside>

    <section class="stage">
      <div class="viewport">
        <svg class="scene" viewBox="43 105 1018 570" role="img" aria-label="Tower model">
          <defs>
            <clipPath id="roof"><path d={roofEdge} /></clipPath>
          </defs>
          {@render mesh(podium)}
          <path d={roofEdge} fill="#9b9ca1" stroke="#0c0c0e" />
          <g clip-path="url(#roof)" fill="none" stroke="#222" stroke-width="0.7">
            <path d={roofLines} />
            <path d="M545 408Q518 424 526 445Q537 468 575 480M540 408Q512 428 526 452" stroke-width="0.9" />
          </g>
          {@render mesh(tower)}
          {@render mesh([backWall])}
          <g fill="#55555a" stroke="#0c0c0e">
            <path d="M593 146Q610 131 640 127Q664 127 678 130L668 142L650 148L600 149z" />
            <path d="M606 148Q622 137 640 136L656 139L640 150z" fill="#d5d5d3" stroke-width="0.8" />
            <path d="M598 146Q618 133 645 130L672 132M602 146Q620 135 645 133L668 135" fill="none" stroke="#ccc" stroke-width="0.7" stroke-dasharray="2 1" />
            <path d="M613 142v6M619 139v9M625 138v9M631 137v9M637 136v9M643 136v8M649 137v6" stroke-width="0.7" />
          </g>
          {@render mesh([crown])}
          <g class="axes">
            <path d="M67 631v20l17 6M67 651l11-10" />
            <text x="69" y="635">z</text>
            <text x="79" y="641">y</text>
            <text x="86" y="657">x</text>
          </g>
        </svg>
        <button class="view-label">Perspective<span>▼</span></button>
      </div>
      <div class="view-tabs">
        {#each ['Perspective', 'Top', 'Front', 'Right'] as view}
          <button class:active={view === activeView} onclick={() => (activeView = view)}>{view}</button>
        {/each}
        <svg width="8" height="8" viewBox="0 0 8 8" fill="none" stroke="#888" stroke-width="0.8"><path d="M3 1h2v2h2v2H5v2H3V5H1V3h2z" /></svg>
      </div>
    </section>

    <aside class="panels">
      <section class="properties">
        <h2><span>Properties: View properties</span></h2>
        <div class="panel-tabs">
          {#each panelTabs as name, i}
            <button class:active={i === 0} aria-label={name}>{@render icon(name, 11)}</button>
          {/each}
          <span class="cog faint">{@render icon('cog', 10)}</span>
        </div>
        <div class="modes">
          <button class="active" aria-label="View">{@render icon('camera')}</button>
          <button aria-label="Material">{@render icon('link')}</button>
          <button aria-label="Frame">{@render icon('frame')}</button>
        </div>
        <div class="property-area">
          <div class="property-list">
            {#each sections as section}
              <h3>{section.title}</h3>
              {#each section.rows as row}
                {@const id = `${section.title}-${row.label}`}
                <div class="property" class:dim={row.dim}>
                  <label for={id}>{row.label}</label>
                  <div class="value">
                    {#if row.kind === 'text'}
                      <input {id} type="text" value={row.value} />
                    {:else if row.kind === 'select'}
                      <div class="select">
                        <select {id}>
                          <option>Perspective</option>
                          <option>Parallel</option>
                          <option>Two-Point Perspective</option>
                        </select>
                        <span><svg width="6" height="4" viewBox="0 0 6 4"><path d="M0 0l3 3 3-3" fill="none" stroke="#666" stroke-width="0.8" /></svg></span>
                      </div>
                    {:else if row.kind === 'check'}
                      <input {id} type="checkbox" checked={row.checked} />
                    {:else if row.kind === 'static'}
                      <output {id}>{row.value}</output>
                    {:else if row.kind === 'button'}
                      <button {id} class="place">Place...</button>
                    {:else}
                      <input {id} type="text" value={row.value} class="file" />
                      <button class="browse" aria-label="Browse">...</button>
                    {/if}
                  </div>
                </div>
              {/each}
            {/each}
          </div>
          <div class="vscroll">
            <svg width="6" height="4" viewBox="0 0 6 4"><path d="M0 4l3-3 3 3" fill="none" stroke="#888" stroke-width="0.8" /></svg>
            <span class="thumb"></span>
            <svg width="6" height="4" viewBox="0 0 6 4"><path d="M0 0l3 3 3-3" fill="none" stroke="#888" stroke-width="0.8" /></svg>
          </div>
        </div>
      </section>

      <section class="layers">
        <div class="layers-head">
          <h2>{@render icon('layers', 11)}Layers</h2>
          <svg class="slope" width="24" height="15" viewBox="0 0 24 15"><path d="M0 0.500Q6 0 10 6T22 14.500" fill="none" stroke="#c9cdd9" /></svg>
          <span class="cog faint">{@render icon('cog', 10)}</span>
        </div>
        <div class="layer-tools">
          {#each layerTools as name}
            {@render tool(name, 11)}
          {/each}
        </div>
        <div class="table-wrap">
          <table>
            <colgroup>
              <col class="c-name" /><col class="c-small" /><col class="c-small" /><col class="c-small" /><col class="c-small" />
              <col class="c-mat" /><col class="c-type" /><col class="c-small" /><col />
            </colgroup>
            <thead>
              <tr>
                <th>Layer</th><th></th><th></th><th></th><th></th><th>M...</th><th>Linetype</th><th></th><th>Print W</th>
              </tr>
            </thead>
            <tbody>
              {#each layers as layer}
                <tr class:current={layer.current}>
                  <td class="name">{layer.name}</td>
                  <td>{#if layer.current}{@render icon('tick', 10)}{/if}</td>
                  <td>{#if !layer.current}{@render icon('yellowBulb', 9)}{/if}</td>
                  <td>{#if !layer.current}{@render icon('unlock', 9)}{/if}</td>
                  <td><span class="swatch" style:background={layer.color}></span></td>
                  <td></td>
                  <td>Continuous</td>
                  <td><svg class="icon" width="9" height="9" viewBox="0 0 9 9"><path d="M4.500 0.500l4 4-4 4-4-4z" fill={layer.color} stroke="#222" stroke-width="0.7" /></svg></td>
                  <td class="print">Default</td>
                </tr>
              {/each}
            </tbody>
          </table>
        </div>
        <div class="hscroll">
          <svg width="5" height="6" viewBox="0 0 5 6"><path d="M5 0v6L0 3z" fill="#666" /></svg>
          <span class="thumb"></span>
          <svg width="5" height="6" viewBox="0 0 5 6"><path d="M0 0v6l5-3z" fill="#666" /></svg>
        </div>
      </section>
    </aside>
  </main>

  <div class="osnap">
    {#each snaps as snap}
      <label><input type="checkbox" bind:checked={snap.on} />{snap.name}</label>
    {/each}
    <label class="plain"><input type="checkbox" />Project</label>
    <label class="plain"><input type="checkbox" />Disable</label>
  </div>

  <footer class="status">
    <span class="s-plane">CPlane</span>
    <span class="s-coord">x 996216.75</span>
    <span class="s-coord">y 104438.22</span>
    <span class="s-coord">z 0.00</span>
    <span class="s-coord">Millimeters</span>
    <span class="s-layer"><i></i>Default</span>
    <button>Grid Snap</button>
    <button>Ortho</button>
    <button>Planar</button>
    <button class="on">Osnap</button>
    <button class="on">SmartTrack</button>
    <button class="on">Gumball</button>
    <button>Record History</button>
    <button>Filter</button>
    <span class="s-tolerance">Absolute tolerance: 0.01</span>
  </footer>
</div>

<style>
  :global(body) {
    margin: 0;
  }

  .app {
    display: flex;
    flex-direction: column;
    height: 100vh;
    overflow: hidden;
    background: #ebecf1;
    color: #1d1d20;
    font: 8px/12px Roboto, 'Open Sans', sans-serif;
  }

  .app :is(button, input, select) {
    box-sizing: border-box;
    margin: 0;
    padding: 0;
    border: 0;
    background: none;
    color: inherit;
    font: inherit;
  }

  h2,
  h3,
  p {
    margin: 0;
    font: inherit;
  }

  .icon {
    display: block;
  }

  .titlebar {
    display: flex;
    align-items: center;
    gap: 3px;
    height: 15px;
    padding-left: 2px;
    background: #eef3fb;
  }

  .window-buttons {
    display: flex;
    gap: 22px;
    margin-left: auto;
    padding-right: 12px;
  }

  .window-buttons button {
    display: flex;
  }

  .menubar {
    display: flex;
    gap: 9px;
    height: 13px;
    padding-left: 4px;
    background: #fff;
  }

  .menubar u {
    text-underline-offset: 1px;
  }

  .command {
    margin: 2px 0 3px 3px;
    background: #fff;
  }

  .history {
    height: 19px;
    margin-right: 9px;
    padding-left: 2px;
    line-height: 10px;
  }

  .prompt {
    display: flex;
    align-items: center;
    height: 12px;
    padding-left: 2px;
    border-top: 1px solid #cfcfd4;
  }

  .prompt label {
    font-weight: 700;
  }

  .caret {
    width: 1px;
    height: 9px;
    margin-left: 2px;
    background: #222;
  }

  .prompt input {
    flex: 1;
    height: 11px;
    outline: 0;
  }

  .spinner {
    display: flex;
    flex-direction: column;
    width: 9px;
    background: #dcdce0;
  }

  .spinner button {
    height: 6px;
    font-size: 4px;
    line-height: 6px;
  }

  .tool-tabs {
    display: flex;
    height: 15px;
    padding-left: 3px;
    border-top: 1px solid #dcdfe8;
    border-bottom: 1px solid #c9cfe0;
    box-sizing: border-box;
  }

  .app .tool-tabs button {
    padding: 1px 7px 0;
    color: #3a3a3e;
  }

  .app .tool-tabs button.active {
    border: 1px solid #c9cfe0;
    border-width: 0 1px 0 0;
    border-radius: 0 4px 0 0;
    padding-left: 8px;
    background: #f0f1f5;
  }

  .cog {
    align-self: center;
    margin-left: auto;
    color: #888;
  }

  .cog.faint {
    color: #c4c6cc;
  }

  .toolbar {
    display: grid;
    grid-template-columns: repeat(33, 1fr);
    width: 617px;
    height: 25px;
    padding-left: 4px;
  }

  .tool {
    position: relative;
    display: flex;
    align-items: center;
    justify-content: center;
  }

  .toolbar :global(.tool) {
    height: 18px;
  }

  .flyout::after {
    content: '';
    position: absolute;
    right: 0;
    bottom: 0;
    border: 2px solid #666;
    border-top-color: transparent;
    border-left-color: transparent;
  }

  .body {
    display: flex;
    flex: 1;
    min-height: 0;
  }

  .side-tools {
    display: grid;
    grid-template-columns: 1fr 1fr;
    grid-auto-rows: 1fr;
    width: 37px;
    height: 337px;
    margin: 4px 5px 0 1px;
    border-top: 1px solid #d3d7e2;
  }

  .stage {
    display: flex;
    flex: 1;
    flex-direction: column;
    min-width: 0;
  }

  .viewport {
    position: relative;
    flex: 1;
    min-height: 0;
    background: #9ca6ae;
  }

  .scene {
    display: block;
    width: 100%;
    height: 100%;
  }

  .axes {
    fill: none;
    stroke: #555c66;
    stroke-width: 0.8;
  }

  .axes text {
    fill: #555c66;
    stroke: none;
    font-size: 9px;
  }

  .app .view-label {
    position: absolute;
    top: 1px;
    left: 1px;
    display: flex;
    gap: 5px;
    padding: 0 2px 0 4px;
    background: #7ba4ee;
    color: #0f1c40;
    font-weight: 600;
    line-height: 11px;
  }

  .view-label span {
    padding-left: 2px;
    border-left: 1px solid #4a6cae;
    font-size: 5px;
  }

  .view-tabs {
    display: flex;
    align-items: center;
    height: 16px;
  }

  .app .view-tabs button {
    height: 14px;
    padding: 0 5px;
  }

  .app .view-tabs button.active {
    padding: 0 3px 0 6px;
    border: 1px solid #cdd2df;
    border-top: 0;
    border-radius: 0 0 3px 5px;
    background: #f1f2f6;
  }

  .view-tabs svg {
    margin-left: 4px;
  }

  .panels {
    display: flex;
    flex-direction: column;
    width: 219px;
    box-sizing: border-box;
    padding-left: 3px;
    border-left: 3px solid #d4d7e0;
    overflow: hidden;
  }

  .properties h2 {
    display: flex;
    align-items: center;
    gap: 4px;
    height: 14px;
    padding-left: 1px;
  }

  .properties h2::after {
    content: '';
    flex: 1;
    border-top: 1px solid #cdd0da;
  }

  .panel-tabs {
    display: flex;
    height: 12px;
    border-bottom: 1px solid #c9cfe0;
  }

  .panel-tabs button {
    display: flex;
    flex: 0 0 28px;
    align-items: center;
    justify-content: center;
  }

  .app .panel-tabs button.active {
    border: 1px solid #c9cfe0;
    border-bottom: 0;
  }

  .modes {
    display: flex;
    gap: 3px;
    height: 27px;
    padding: 3px 0 0 4px;
    box-sizing: border-box;
  }

  .modes button {
    display: flex;
    align-items: center;
    justify-content: center;
    width: 18px;
    height: 18px;
  }

  .app .modes button.active {
    background: #b4c8ef;
  }

  .property-area {
    display: flex;
    gap: 5px;
    border-bottom: 1px solid #cbd0de;
  }

  .property-list {
    flex: 1;
    padding-left: 5px;
  }

  h3 {
    height: 17px;
    font-size: 9px;
    line-height: 19px;
  }

  .property {
    display: flex;
    height: 14px;
  }

  .property label {
    flex: 0 0 83px;
    box-sizing: border-box;
    margin-left: 12px;
    padding-left: 1px;
    border-top: 1px solid #dfe1e8;
    line-height: 13px;
  }

  .dim label {
    color: #77777c;
  }

  .value {
    display: flex;
    flex: 1;
    min-width: 0;
    align-items: center;
    box-sizing: border-box;
    border-top: 1px solid #dfe1e8;
  }

  .app .value input[type='text'] {
    width: 100%;
    height: 13px;
    padding-left: 3px;
    background: #fff;
  }

  output {
    padding-left: 3px;
  }

  .select {
    display: flex;
    position: relative;
    flex: 1;
    height: 13px;
    background: #fff;
  }

  .app .select select {
    flex: 1;
    padding-left: 3px;
    appearance: none;
  }

  .select span {
    position: absolute;
    top: 0;
    right: 1px;
    display: flex;
    align-items: center;
    justify-content: center;
    width: 11px;
    height: 11px;
    border: 1px solid #d4d6dc;
    border-radius: 2px;
    pointer-events: none;
  }

  .app .place {
    flex: 1;
    height: 12px;
    margin: 0 1px;
    border: 1px solid #cfd1d8;
    border-radius: 2px;
    background: #fdfdfe;
    line-height: 10px;
  }

  .app .value input.file {
    padding-left: 2px;
  }

  .app .browse {
    flex: 0 0 12px;
    height: 12px;
    margin-right: 1px;
    border: 1px solid #cfd1d8;
    border-radius: 2px;
    background: #fdfdfe;
    line-height: 6px;
  }

  .app input[type='checkbox'] {
    position: relative;
    flex: none;
    width: 9px;
    height: 9px;
    border: 1px solid #777a80;
    border-radius: 2px;
    background: #f6f6f8;
    appearance: none;
  }

  .app .value input[type='checkbox'] {
    margin-left: 2px;
  }

  .app input[type='checkbox']:checked {
    border-color: #0f5fb8;
    background: #0f62bd;
  }

  input[type='checkbox']:checked::after {
    content: '';
    position: absolute;
    top: 1px;
    left: 1px;
    width: 4px;
    height: 2px;
    border: 1px solid #fff;
    border-top: 0;
    border-right: 0;
    transform: rotate(-45deg);
  }

  .vscroll {
    display: flex;
    flex-direction: column;
    align-items: center;
    gap: 4px;
    width: 11px;
    padding-bottom: 4px;
  }

  .vscroll .thumb {
    flex: 1;
    align-self: stretch;
    background: #c9cacd;
  }

  .layers {
    display: flex;
    flex: 1;
    flex-direction: column;
    min-height: 0;
    margin: 10px 0 4px;
    border-bottom: 1px solid #cbd0de;
  }

  .layers-head {
    display: flex;
    height: 15px;
    border-bottom: 1px solid #c9cdd9;
  }

  .layers h2 {
    display: flex;
    align-items: center;
    gap: 1px;
    padding-left: 2px;
    border-top: 1px solid #c9cdd9;
  }

  .layer-tools {
    display: flex;
    align-items: center;
    gap: 4px;
    height: 21px;
    padding-left: 5px;
  }

  .layer-tools :global(.tool) {
    width: 11px;
    height: 11px;
  }

  .table-wrap {
    flex: 1;
    overflow: hidden;
    background: #fff;
  }

  table {
    width: 100%;
    table-layout: fixed;
    border-collapse: collapse;
  }

  .c-name {
    width: 52px;
  }

  .c-small {
    width: 12px;
  }

  .c-mat {
    width: 19px;
  }

  .c-type {
    width: 54px;
  }

  th {
    height: 15px;
    padding: 0 0 0 3px;
    border-right: 1px solid #eceef2;
    font-weight: 400;
    text-align: left;
    white-space: nowrap;
  }

  th:last-child {
    padding-left: 1px;
    border-right: 0;
  }

  td {
    height: 12px;
    padding: 0 0 0 2px;
    border-bottom: 1px solid #eff0f3;
    line-height: 12px;
    white-space: nowrap;
  }

  td.name {
    padding-left: 5px;
  }

  td.print {
    padding-left: 1px;
  }

  .current {
    font-weight: 700;
  }

  .swatch {
    display: block;
    width: 8px;
    height: 8px;
    box-sizing: border-box;
    border: 1px solid #222;
  }

  .hscroll {
    display: flex;
    align-items: center;
    gap: 4px;
    height: 10px;
    padding: 0 5px 0 3px;
  }

  .hscroll .thumb {
    height: 4px;
    flex: 1;
    margin-right: 22px;
    border-radius: 2px;
    background: #858588;
  }

  .osnap {
    display: flex;
    align-items: center;
    height: 14px;
    margin: 2px 0 0 2px;
    padding-left: 3px;
    border-left: 1px solid #d5d8e0;
  }

  .osnap label {
    display: flex;
    align-items: center;
    gap: 2px;
    margin-right: 4px;
  }

  .osnap .plain {
    margin-right: 10px;
  }

  .app .osnap .plain input {
    border-color: #e0e1e5;
    background: #fff;
  }

  .status {
    display: flex;
    height: 13px;
    box-sizing: border-box;
    border-top: 1px solid #d5d8e0;
    text-align: center;
  }

  .status > * {
    flex: none;
    box-sizing: border-box;
    white-space: nowrap;
  }

  .app .status > :is(button, span) {
    padding: 0 5px;
    border-right: 1px solid #d5d8e0;
  }

  .app .status > .s-plane {
    width: 34px;
    padding: 0 2px;
  }

  .s-coord {
    width: 58px;
  }

  .app .status > .s-layer {
    display: flex;
    align-items: center;
    gap: 1px;
    width: 113px;
    padding-left: 3px;
  }

  .s-layer i {
    width: 9px;
    height: 9px;
    background: #000;
  }

  .app .status .on {
    background: #dbe4f5;
    font-weight: 700;
  }

  .app .status > .s-tolerance {
    padding-left: 2px;
    border: 0;
  }
</style>
